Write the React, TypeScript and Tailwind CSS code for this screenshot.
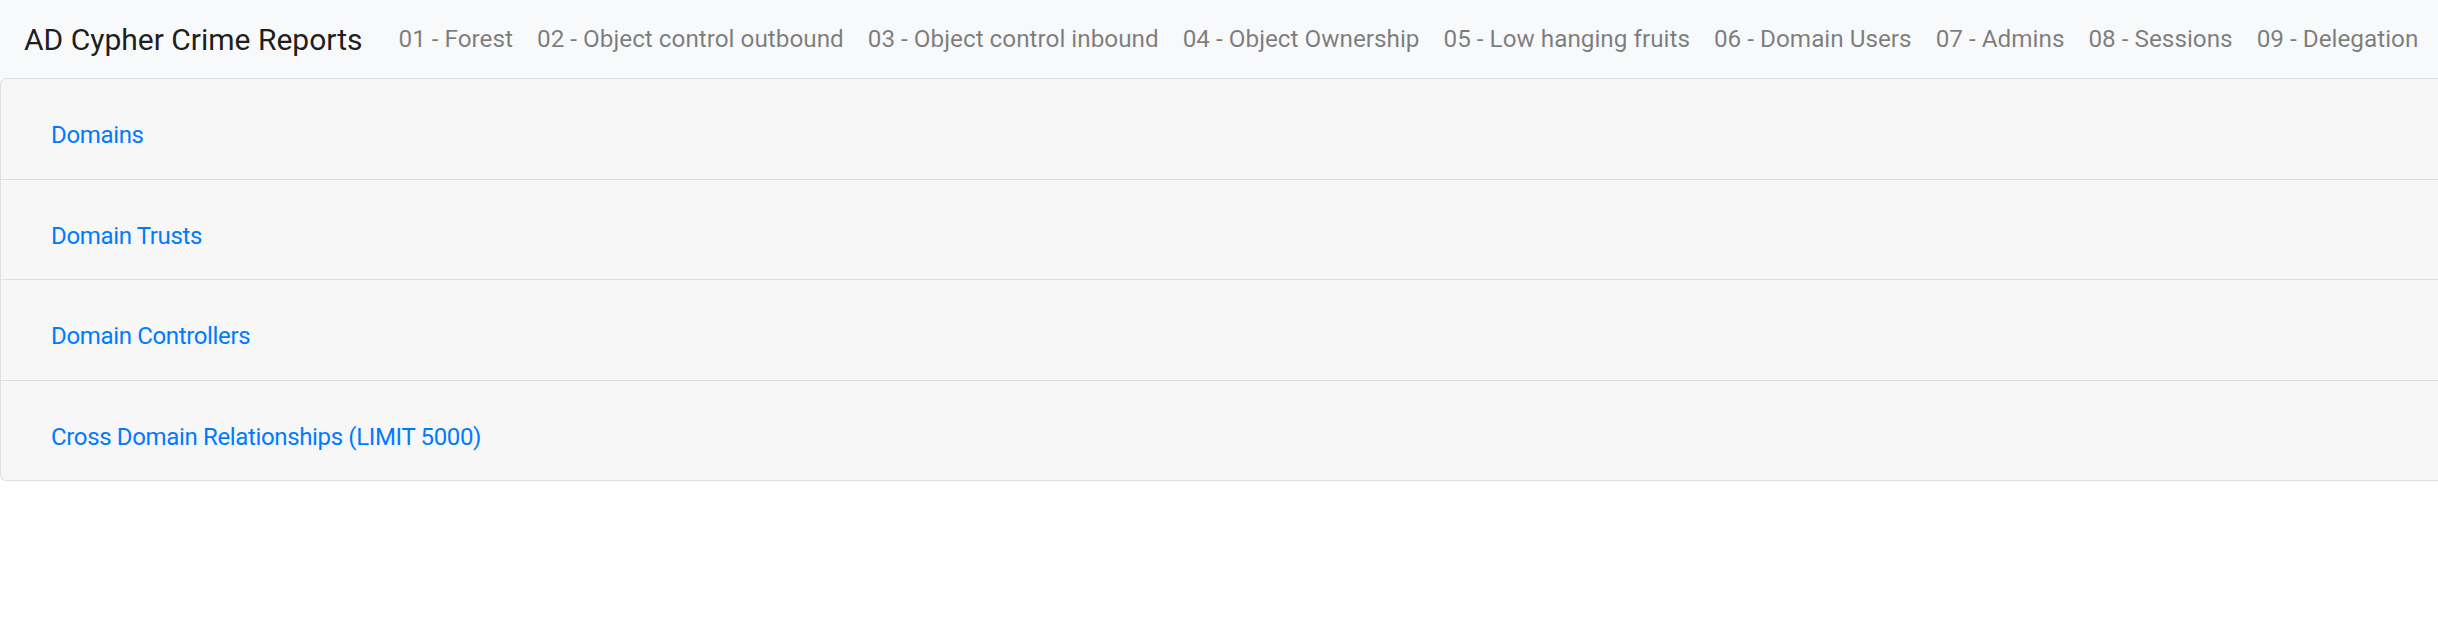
import React from "react";

const links = [
  "01 - Forest",
  "02 - Object control outbound",
  "03 - Object control inbound",
  "04 - Object Ownership",
  "05 - Low hanging fruits",
  "06 - Domain Users",
  "07 - Admins",
  "08 - Sessions",
  "09 - Delegation",
];

const sections = [
  { label: "Domains", cls: "flex h-[101px] items-center border-b border-[#dfdfdf] pl-[50px] pt-[12px]" },
  { label: "Domain Trusts", cls: "flex h-[100px] items-center border-b border-[#dfdfdf] pl-[50px] pt-[12px]" },
  { label: "Domain Controllers", cls: "flex h-[101px] items-center border-b border-[#dfdfdf] pl-[50px] pt-[12px]" },
  { label: "Cross Domain Relationships (LIMIT 5000)", cls: "flex h-[99px] items-center pl-[50px] pt-[12px]" },
];

export default function App() {
  return (
    <div className="w-[2438px] min-h-[643px] overflow-hidden bg-white font-['Roboto','Noto_Sans',sans-serif]">
      <nav className="flex h-[78px] items-center whitespace-nowrap bg-[#f8f9fa] px-[24px]">
        <span className="mr-[24px] text-[30px] leading-[45px] text-black/90">AD Cypher Crime Reports</span>
        {links.map((l) => (
          <a key={l} className="px-[12px] text-[24.3px] leading-[36px] text-black/50">
            {l}
          </a>
        ))}
      </nav>
      <div className="flex flex-col rounded-bl-[6px] rounded-tl-[6px] border-y border-l border-[#dfdfdf] bg-[#f7f7f7]">
        {sections.map((s) => (
          <div key={s.label} className={s.cls}>
            <a className="text-[24px] leading-[36px] tracking-[-0.35px] text-[#007bff]">{s.label}</a>
          </div>
        ))}
      </div>
    </div>
  );
}
